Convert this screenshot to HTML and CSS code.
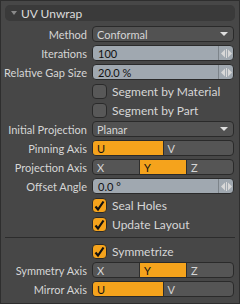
FILE: index.html
```html
<!DOCTYPE html>
<html lang="en">

<head>
    <meta charset="UTF-8">
    <title>UV Unwrap</title>
    <link rel="stylesheet" href="styles.css">
</head>

<body>
    <div class="panel">
        <div class="header"><span class="tri"></span>UV Unwrap</div>

        <div class="form">
            <div class="label">Method</div>
            <div class="select">Conformal<span class="arrow"></span></div>

            <div class="label">Iterations</div>
            <div class="field">100<span class="handle"><svg width="11" height="9" viewBox="0 0 11 9"><path d="M4 0.5 L0 4.5 L4 8.5 Z M7 0.5 L11 4.5 L7 8.5 Z" fill="#d8d8d8"/><rect x="5" y="0" width="1" height="9" fill="#d8d8d8"/></svg></span></div>

            <div class="label">Relative Gap Size</div>
            <div class="field">20.0 %<span class="handle"><svg width="11" height="9" viewBox="0 0 11 9"><path d="M4 0.5 L0 4.5 L4 8.5 Z M7 0.5 L11 4.5 L7 8.5 Z" fill="#d8d8d8"/><rect x="5" y="0" width="1" height="9" fill="#d8d8d8"/></svg></span></div>

            <div class="label"></div>
            <div class="check"><span class="box"></span>Segment by Material</div>

            <div class="label"></div>
            <div class="check"><span class="box"></span>Segment by Part</div>

            <div class="label">Initial Projection</div>
            <div class="select">Planar<span class="arrow"></span></div>

            <div class="label">Pinning Axis</div>
            <div class="axis">
                <span class="on">U</span>
                <span>V</span>
            </div>

            <div class="label">Projection Axis</div>
            <div class="axis">
                <span>X</span>
                <span class="on">Y</span>
                <span>Z</span>
            </div>

            <div class="label">Offset Angle</div>
            <div class="field">0.0 °<span class="handle"><svg width="11" height="9" viewBox="0 0 11 9"><path d="M4 0.5 L0 4.5 L4 8.5 Z M7 0.5 L11 4.5 L7 8.5 Z" fill="#d8d8d8"/><rect x="5" y="0" width="1" height="9" fill="#d8d8d8"/></svg></span></div>

            <div class="label"></div>
            <div class="check"><span class="box on"><svg width="13" height="13" viewBox="0 0 13 13"><path d="M2.5 7.5 L5 10.5 L10.5 2.5" stroke="#111" stroke-width="2.2" fill="none"/></svg></span>Seal Holes</div>

            <div class="label"></div>
            <div class="check"><span class="box on"><svg width="13" height="13" viewBox="0 0 13 13"><path d="M2.5 7.5 L5 10.5 L10.5 2.5" stroke="#111" stroke-width="2.2" fill="none"/></svg></span>Update Layout</div>
        </div>

        <div class="sep"></div>

        <div class="form">
            <div class="label"></div>
            <div class="check"><span class="box on"><svg width="13" height="13" viewBox="0 0 13 13"><path d="M2.5 7.5 L5 10.5 L10.5 2.5" stroke="#111" stroke-width="2.2" fill="none"/></svg></span>Symmetrize</div>

            <div class="label">Symmetry Axis</div>
            <div class="axis">
                <span>X</span>
                <span class="on">Y</span>
                <span>Z</span>
            </div>

            <div class="label">Mirror Axis</div>
            <div class="axis">
                <span class="on">U</span>
                <span>V</span>
            </div>
        </div>
    </div>
</body>

</html>
```

FILE: styles.css
```css
body {
    margin: 0;
    background-color: #474747;
    color: #d6d6d6;
    font-family: 'Lato', sans-serif;
    font-size: 11px;
}

.panel {
    width: 240px;
    height: 304px;
    box-sizing: border-box;
    border: 1px solid #2e2e2e;
    padding: 4px 4px 0 4px;
}

.header {
    height: 16px;
    background-color: #3a3a3a;
    border-radius: 5px;
    display: flex;
    align-items: center;
    font-size: 12px;
    color: #dcdcdc;
    padding-left: 6px;
}

.tri {
    width: 0;
    height: 0;
    border-left: 3px solid transparent;
    border-right: 3px solid transparent;
    border-top: 4px solid #8a8a8a;
    margin-right: 4px;
}

.form {
    display: grid;
    grid-template-columns: 82px 142px;
    column-gap: 5px;
    row-gap: 3px;
    margin-top: 5px;
}

.label {
    height: 16px;
    display: flex;
    justify-content: flex-end;
    align-items: center;
    white-space: nowrap;
}

.select,
.field,
.axis {
    height: 16px;
    box-sizing: border-box;
    border: 1px solid #2a2a2a;
    border-radius: 4px;
    display: flex;
    align-items: center;
}

.select {
    background-color: #525252;
    padding-left: 4px;
    justify-content: space-between;
}

.arrow {
    width: 0;
    height: 0;
    border-left: 4px solid transparent;
    border-right: 4px solid transparent;
    border-top: 4px solid #e0e0e0;
    margin-right: 5px;
}

.field {
    background-color: #a0a8b0;
    color: #111111;
    padding-left: 5px;
    justify-content: space-between;
}

.handle {
    width: 14px;
    height: 100%;
    border-left: 1px solid #7d848a;
    display: flex;
    align-items: center;
    justify-content: center;
}

.check {
    height: 16px;
    display: flex;
    align-items: center;
    white-space: nowrap;
    font-size: 12px;
}

.box {
    width: 15px;
    height: 15px;
    box-sizing: border-box;
    border: 1px solid #2a2a2a;
    border-radius: 4px;
    background-color: #585858;
    margin-right: 5px;
    display: flex;
    align-items: center;
    justify-content: center;
}

.box.on {
    background-color: #f5a31c;
}

.axis {
    background-color: #555555;
    overflow: hidden;
}

.axis span {
    flex: 1;
    height: 100%;
    display: flex;
    align-items: center;
    padding-left: 4px;
}

.axis span + span {
    border-left: 1px solid #2e2e2e;
}

.axis .on {
    background-color: #f5a31c;
    color: #111111;
}

.sep {
    height: 1px;
    background-color: #2c2c2c;
    margin: 5px 0 0 0;
}
```
